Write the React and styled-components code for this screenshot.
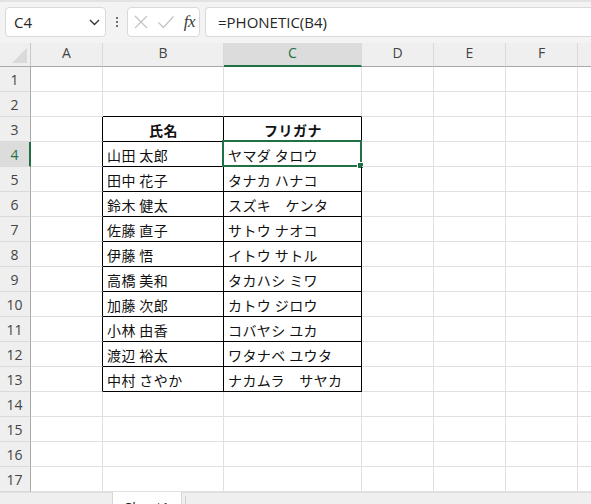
import React from "react";
import styled, { createGlobalStyle } from "styled-components";

const GlobalStyle = createGlobalStyle`
  body {
    margin: 0;
    background: #ffffff;
    overflow: hidden;
  }
`;

const Frame = styled.div`
  width: 591px;
  height: 504px;
  display: flex;
  flex-direction: column;
  overflow: hidden;
  font-family: "Open Sans", "Noto Sans", sans-serif;
`;

const FormulaBar = styled.div`
  height: 43px;
  flex-shrink: 0;
  border-top: 2px solid #e2e2e2;
  background: #f3f3f3;
  display: flex;
  align-items: flex-start;
  padding: 5px 0 0 5px;
  box-sizing: border-box;
`;

const Box = styled.div`
  height: 30px;
  box-sizing: border-box;
  background: #ffffff;
  border: 1px solid #d9d9d9;
  border-radius: 4px;
  display: flex;
  align-items: center;
`;

const NameBox = styled(Box)`
  width: 101px;
  padding: 0 5px 0 8px;
  justify-content: space-between;
  font-size: 15px;
  color: #262626;
`;

const Dots = styled.div`
  width: 21px;
  height: 30px;
  display: flex;
  flex-direction: column;
  align-items: center;
  justify-content: center;
  gap: 2px;

  span {
    width: 2px;
    height: 2px;
    border-radius: 1px;
    background: #444;
  }
`;

const FxBox = styled(Box)`
  width: 73px;
  padding: 0 4px 0 5px;
  justify-content: space-between;
`;

const Fx = styled.span`
  font-family: "Liberation Serif", serif;
  font-style: italic;
  font-size: 17px;
  color: #3a3a3a;
  letter-spacing: -0.5px;
`;

const FormulaInput = styled(Box)`
  flex: 1;
  margin-left: 5px;
  border-right: none;
  border-radius: 4px 0 0 4px;
  padding-left: 12px;
  font-size: 15px;
  color: #262626;
`;

const Sheet = styled.div`
  flex: 1;
  display: flex;
  flex-direction: column;
`;

const Row = styled.div`
  display: flex;
  height: ${p => p.$h}px;
  flex-shrink: 0;
`;

const Corner = styled.div`
  width: 31px;
  flex-shrink: 0;
  box-sizing: border-box;
  background: #efefef;
  border-right: 1px solid #c8c8c8;
  border-bottom: 1px solid #a8a8a8;
  display: flex;
  align-items: flex-end;
  justify-content: flex-end;
  padding: 0 3px 3px 0;
`;

const ColHead = styled.div`
  width: ${p => p.$w}px;
  flex-shrink: 0;
  box-sizing: border-box;
  background: ${p => (p.$active ? "#dcdcdc" : "#efefef")};
  border-right: 1px solid #dadada;
  border-bottom: ${p => (p.$active ? "2px solid #1f7145" : "1px solid #a8a8a8")};
  display: flex;
  align-items: center;
  justify-content: center;
  padding-bottom: ${p => (p.$active ? "4px" : "5px")};
  font-size: 14px;
  color: ${p => (p.$active ? "#1f7145" : "#444444")};
`;

const RowHead = styled.div`
  width: 31px;
  flex-shrink: 0;
  box-sizing: border-box;
  background: ${p => (p.$active ? "#dcdcdc" : "#efefef")};
  border-right: ${p => (p.$active ? "2px solid #1f7145" : "1px solid #a8a8a8")};
  border-bottom: 1px solid #dadada;
  display: flex;
  align-items: center;
  justify-content: center;
  padding-right: ${p => (p.$active ? "0" : "1px")};
  font-size: 14px;
  color: ${p => (p.$active ? "#1f7145" : "#444444")};
`;

const Cell = styled.div`
  position: relative;
  width: ${p => p.$w}px;
  flex-shrink: 0;
  box-sizing: border-box;
  border-right: 1px solid ${p => (p.$rb ? "#000000" : "#e0e0e0")};
  border-bottom: 1px solid ${p => (p.$bb ? "#000000" : "#e0e0e0")};
  display: flex;
  align-items: center;
  justify-content: ${p => (p.$head ? "center" : "flex-start")};
  padding: 1px 3px 0 4px;
  font-family: "Noto Sans CJK JP", sans-serif;
  font-size: 14px;
  letter-spacing: ${p => (p.$head ? "0.5px" : "0.4px")};
  font-weight: ${p => (p.$head ? "bold" : "normal")};
  color: #111111;
  white-space: pre;
`;

const Selection = styled.div`
  position: absolute;
  left: -2px;
  top: -2px;
  right: -1px;
  bottom: -1px;
  border: 2px solid #1f7145;
  pointer-events: none;
`;

const Handle = styled.div`
  position: absolute;
  right: -4px;
  bottom: -4px;
  width: 5px;
  height: 5px;
  background: #1f7145;
  border: 1px solid #ffffff;
`;

const TabBar = styled.div`
  flex: 1;
  background: #efefef;
  border-top: 1px solid #e0e0e0;
  display: flex;
  padding-left: 112px;
`;

const Tab = styled.div`
  width: 70px;
  box-sizing: border-box;
  background: #ffffff;
  border: 1px solid #d6d6d6;
  border-top: none;
  margin-top: -1px;
  padding-top: 6px;
  text-align: center;
  font-size: 14px;
  color: #222;
`;

const TabSep = styled.div`
  width: 1px;
  margin: 3px 0 0 3px;
  background: #d0d0d0;
`;

const columns = [
  { key: "A", w: 72 },
  { key: "B", w: 121 },
  { key: "C", w: 138 },
  { key: "D", w: 72 },
  { key: "E", w: 72 },
  { key: "F", w: 72 },
  { key: "G", w: 40 }
];

const people = [
  ["山田 太郎", "ヤマダ タロウ"],
  ["田中 花子", "タナカ ハナコ"],
  ["鈴木 健太", "スズキ　ケンタ"],
  ["佐藤 直子", "サトウ ナオコ"],
  ["伊藤 悟", "イトウ サトル"],
  ["高橋 美和", "タカハシ ミワ"],
  ["加藤 次郎", "カトウ ジロウ"],
  ["小林 由香", "コバヤシ ユカ"],
  ["渡辺 裕太", "ワタナベ ユウタ"],
  ["中村 さやか", "ナカムラ　サヤカ"]
];

// table lives in B3:C13
const inTable = (col, row) => (col === 1 || col === 2) && row >= 3 && row <= 13;

const cellText = (col, row) => {
  if (row === 3) return col === 1 ? "氏名" : col === 2 ? "フリガナ" : "";
  if (row >= 4 && row <= 13 && (col === 1 || col === 2)) return people[row - 4][col - 1];
  return "";
};

const XIcon = () => (
  <svg width="16" height="16" viewBox="0 0 16 16">
    <path d="M2 2 L14 14 M14 2 L2 14" stroke="#c4c4c4" strokeWidth="1.3" fill="none" />
  </svg>
);

const CheckIcon = () => (
  <svg width="18" height="16" viewBox="0 0 18 16">
    <path d="M1.5 8.5 L6.5 13.5 L16.5 2.5" stroke="#c4c4c4" strokeWidth="1.3" fill="none" />
  </svg>
);

const Chevron = () => (
  <svg width="11" height="7" viewBox="0 0 11 7">
    <path d="M1 1 L5.5 5.5 L10 1" stroke="#333" strokeWidth="1.3" fill="none" />
  </svg>
);

const CornerTriangle = () => (
  <svg width="15" height="15" viewBox="0 0 15 15">
    <path d="M15 0 L15 15 L0 15 Z" fill="#dadada" />
  </svg>
);

export default function App() {
  const rows = Array.from({ length: 17 }, (_, i) => i + 1);

  return (
    <Frame>
      <GlobalStyle />
      <FormulaBar>
        <NameBox>
          <span>C4</span>
          <Chevron />
        </NameBox>
        <Dots>
          <span />
          <span />
          <span />
        </Dots>
        <FxBox>
          <XIcon />
          <CheckIcon />
          <Fx>fx</Fx>
        </FxBox>
        <FormulaInput>=PHONETIC(B4)</FormulaInput>
      </FormulaBar>

      <Sheet>
        <Row $h={24}>
          <Corner>
            <CornerTriangle />
          </Corner>
          {columns.map(c => (
            <ColHead key={c.key} $w={c.w} $active={c.key === "C"}>
              {c.key === "G" ? "" : c.key}
            </ColHead>
          ))}
        </Row>
        {rows.map(r => (
          <Row key={r} $h={25}>
            <RowHead $active={r === 4}>{r}</RowHead>
            {columns.map((c, ci) => {
              const mine = inTable(ci, r);
              const rb = mine || inTable(ci + 1, r);
              const bb = mine || inTable(ci, r + 1);
              return (
                <Cell key={c.key} $w={c.w} $rb={rb} $bb={bb} $head={r === 3 && mine}>
                  {cellText(ci, r)}
                  {r === 4 && ci === 2 && (
                    <Selection>
                      <Handle />
                    </Selection>
                  )}
                </Cell>
              );
            })}
          </Row>
        ))}
        <TabBar>
          <Tab>Sheet1</Tab>
          <TabSep />
        </TabBar>
      </Sheet>
    </Frame>
  );
}
